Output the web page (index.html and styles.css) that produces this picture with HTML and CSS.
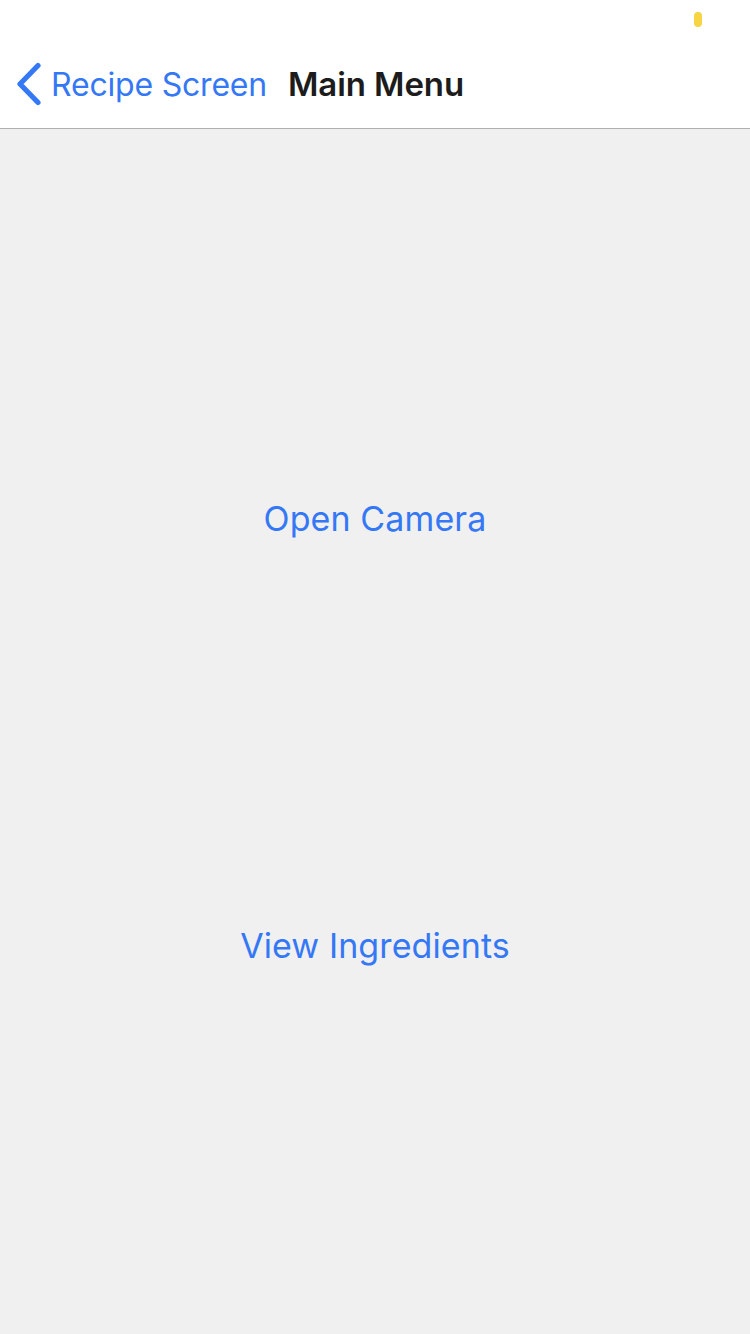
FILE: index.html
```html
<!DOCTYPE html>
<html>
<head>
<meta charset="utf-8">
<link rel="stylesheet" href="styles.css">
</head>
<body>
<div class="screen">
  <header class="header">
    <div class="status"><span class="pill"></span></div>
    <nav class="nav">
      <a class="back">
        <svg class="chev" width="28" height="44" viewBox="0 0 28 44"><path d="M23 3.5 L5 22 L23 40.5" fill="none" stroke="#3478f6" stroke-width="5.2" stroke-linecap="round" stroke-linejoin="round"/></svg>
        <span class="back-label">Recipe Screen</span>
      </a>
      <span class="title">Main Menu</span>
    </nav>
  </header>
  <main class="content">
    <button class="link first">Open Camera</button>
    <button class="link second">View Ingredients</button>
  </main>
</div>
</body>
</html>
```
FILE: styles.css
```css
html, body {
  margin: 0;
  padding: 0;
}
body {
  font-family: Inter, "Noto Sans", sans-serif;
  background: #f0f0f0;
}
.screen {
  width: 750px;
  height: 1334px;
  display: flex;
  flex-direction: column;
  overflow: hidden;
}
.header {
  background: #ffffff;
  border-bottom: 1px solid #b0b0b0;
  height: 128px;
  display: flex;
  flex-direction: column;
}
.status {
  height: 40px;
  display: flex;
  justify-content: flex-end;
  padding-right: 48px;
  align-items: flex-start;
}
.pill {
  width: 8px;
  height: 15px;
  margin-top: 12px;
  border-radius: 4px;
  background: #f6d442;
}
.nav {
  flex: 1;
  display: flex;
  align-items: center;
  padding-left: 15px;
  padding-top: 0;
}
.back {
  display: flex;
  align-items: center;
  color: #3478f6;
}
.chev {
  margin-right: 8px;
}
.back-label {
  font-size: 32px;
  letter-spacing: -0.2px;
}
.title {
  margin-left: 21px;
  font-size: 33px;
  font-weight: 600;
  color: #1c1c1c;
  letter-spacing: -0.1px;
}
.content {
  flex: 1;
  display: flex;
  flex-direction: column;
  align-items: center;
}
.link {
  border: none;
  background: none;
  font-family: inherit;
  font-size: 34px;
  color: #3478f6;
  padding: 0;
  line-height: 40px;
  letter-spacing: 0.1px;
}
.first {
  margin-top: 370px;
}
.second {
  margin-top: 387px;
}
```
